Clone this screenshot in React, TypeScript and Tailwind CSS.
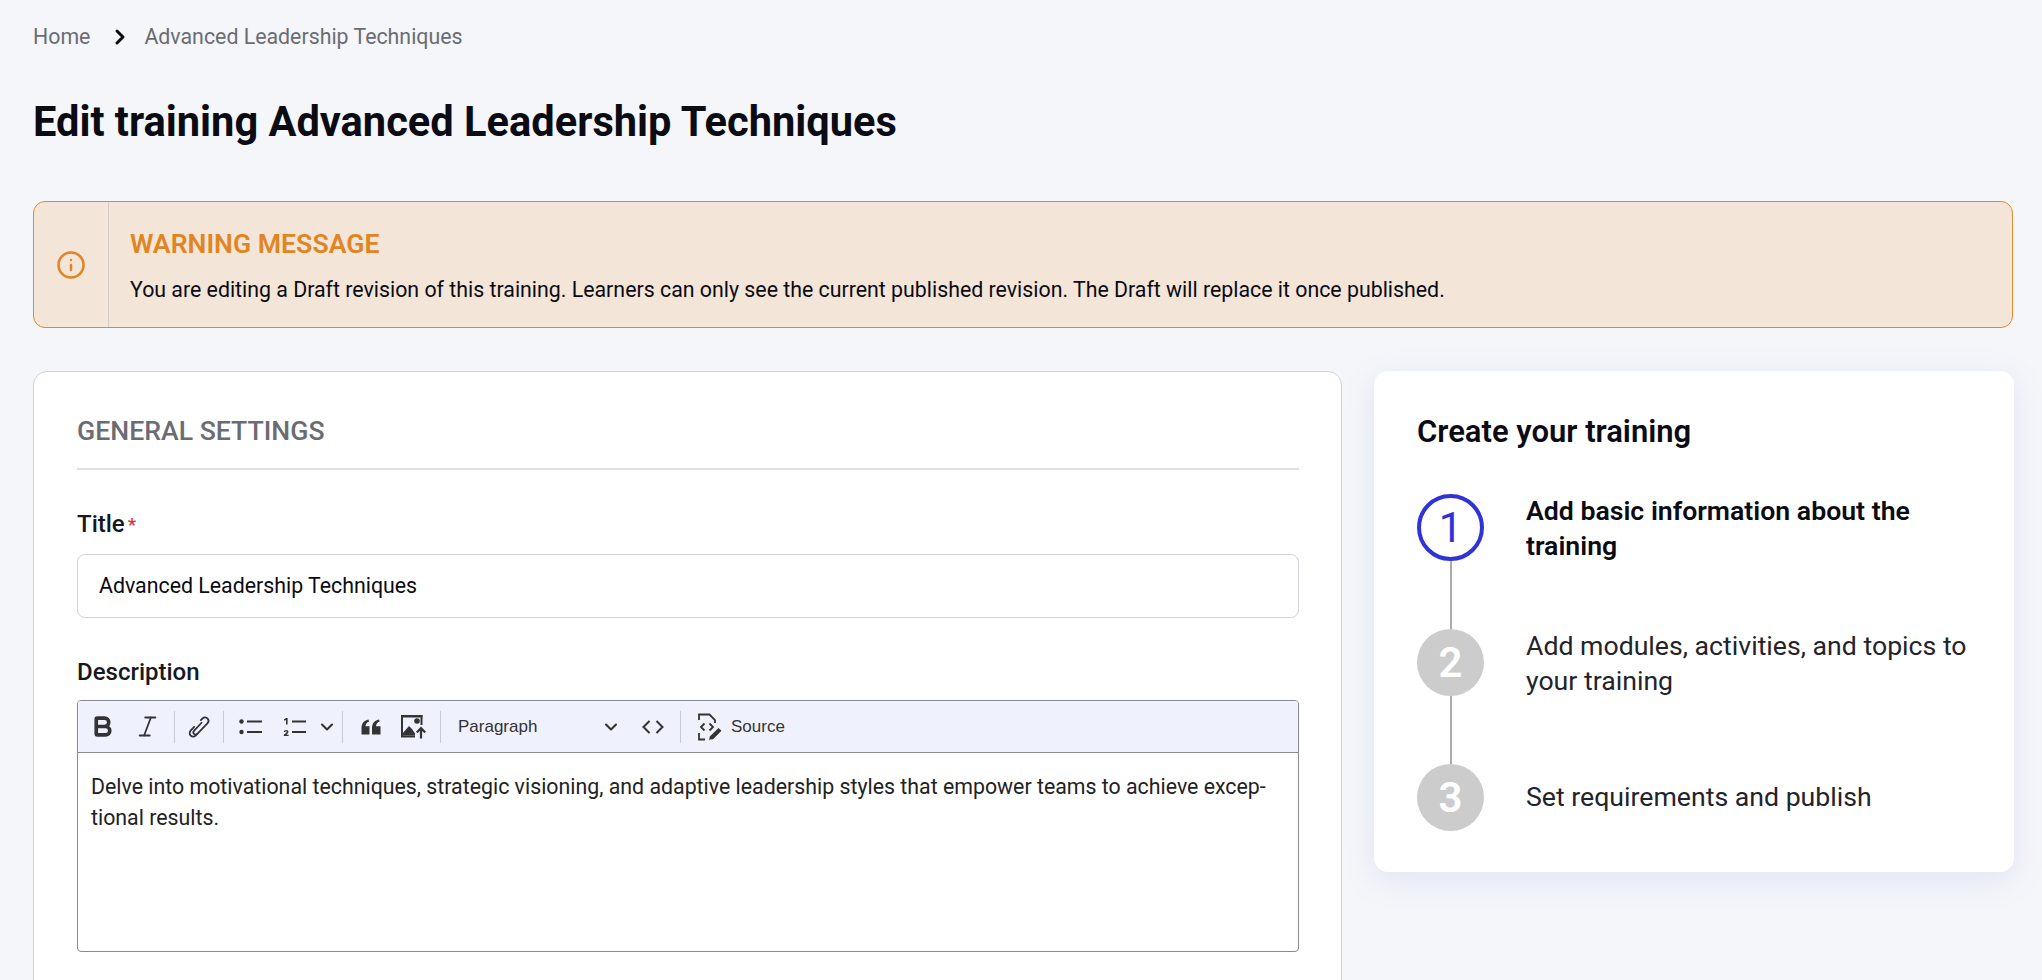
import { Bold, ChevronDown, ChevronRight, Info, Italic } from "lucide-react";

const steps = [
  { n: "1", text: "Add basic information about the training", active: true },
  { n: "2", text: "Add modules, activities, and topics to your training", active: false },
  { n: "3", text: "Set requirements and publish", active: false },
];

function Sep() {
  return <span className="mx-[5px] h-[32px] w-px bg-[#c9cbd1]" />;
}

function LinkIcon() {
  return (
    <svg width="26" height="26" viewBox="0 0 22 22" fill="none" stroke="#333" strokeWidth="1.5" strokeLinecap="round">
      <path d="M12.5 5.200 14 3.800c1.300-1.200 3.200-1.100 4.300.1 1 1.200.9 3-.2 4.100l-8.300 8.700c-.9.9-2.200.9-3 .1-.8-.8-.7-2 .1-2.800l6.300-6.600" />
      <path d="M9.500 16.800l-1.400 1.400c-1.200 1.200-3 1.200-4.100.1-1.100-1.100-1.200-3-.1-4.200l3-3.200" />
    </svg>
  );
}

function BulletIcon() {
  return (
    <svg width="24" height="20" viewBox="0 0 24 20" fill="#333">
      <circle cx="2.500" cy="4.500" r="2.200" />
      <circle cx="2.500" cy="15" r="2.200" />
      <rect x="8" y="3.500" width="15" height="2" />
      <rect x="8" y="14" width="15" height="2" />
    </svg>
  );
}

function NumberIcon() {
  return (
    <svg width="24" height="20" viewBox="0 0 24 20" fill="#333">
      <path d="M1 2.200 3.200 1H4.600v6.500H3V2.900L1 3.700z" />
      <path d="M.8 19v-1.300l2.600-2.300c.5-.5.4-1.200-.3-1.200-.6 0-.8.4-.9.9L.8 15c.1-1.300 1-2.100 2.400-2.100 1.500 0 2.300.8 2.300 1.900 0 .8-.4 1.300-1.100 1.900l-1.100 1h2.300V19z" />
      <rect x="9" y="3.500" width="14" height="2" />
      <rect x="9" y="14" width="14" height="2" />
    </svg>
  );
}

function QuoteIcon() {
  return (
    <svg width="20" height="16" viewBox="0 0 20 16" fill="#333">
      <path d="M.5 15.500V9.600C.5 4.800 2.700 1.500 7.500.5l.6 1.900C5.700 3.300 4.600 5 4.500 7.200h4v8.300z" />
      <path d="M11 15.500V9.600C11 4.800 13.200 1.500 18 .5l.6 1.900c-2.400.9-3.500 2.600-3.600 4.800h4.500v8.300z" />
    </svg>
  );
}

function ImageUploadIcon() {
  return (
    <svg width="28" height="26" viewBox="0 0 28 26">
      <path d="M1 1h21.500v2.500H1z" fill="#333" />
      <path d="M1 1h2v20.500h12v2H1zM20.500 1h2v10h-2z" fill="#333" />
      <circle cx="17" cy="7" r="2.800" fill="#333" />
      <path d="M3 21.500V19l6-7 3 3 3 4.500v2z" fill="#333" />
      <path d="M21 24.500v-10M16.800 18.500l4.200-4.500 4.200 4.500" fill="none" stroke="#333" strokeWidth="2.200" />
    </svg>
  );
}

function CodeIcon() {
  return (
    <svg width="22" height="14" viewBox="0 0 22 14" fill="none" stroke="#333" strokeWidth="2">
      <path d="M7.500 1 1.500 7l6 6M14.500 1l6 6-6 6" />
    </svg>
  );
}

function SourceIcon() {
  return (
    <svg width="26" height="28" viewBox="0 0 26 28" fill="none" stroke="#333" strokeWidth="1.800">
      <path d="M2 7V1.500h10.500L18 7v3M2 20v6.500h6" />
      <path d="M7.500 10.500l-3.500 3.500 3.500 3.500M12.500 10.500l3.500 3.500-3.500 3.500" />
      <path d="M13 26.500l-1 1 .8-4L21.500 15l3 2.800-8.500 8.500z" fill="#333" stroke="none" />
    </svg>
  );
}

function ToolBtn({ children, w }: { children: React.ReactNode; w: string }) {
  return <span className={`flex h-[52px] items-center justify-center ${w}`}>{children}</span>;
}

export default function App() {
  return (
    <div className="h-screen overflow-hidden bg-[#f4f6fa] pl-[33px] font-['Roboto',sans-serif]">
      <nav className="flex h-[74px] items-center text-[21.33px] text-[#6b6c72]">
        <span>Home</span>
        <ChevronRight className="ml-[18px] mr-[12px] size-[24px] text-[#0b0b14]" strokeWidth={3} />
        <span>Advanced Leadership Techniques</span>
      </nav>

      <h1 className="mt-[23px] text-[41.6px] font-bold leading-[50px] text-[#0b0b14]">
        Edit training Advanced Leadership Techniques
      </h1>

      <div className="mt-[54px] flex h-[127px] w-[1980px] rounded-[12px] border border-[#e08a2d] bg-[#f3e5d7]">
        <div className="flex w-[75px] flex-none items-center justify-center border-r border-[#d2cec8]">
          <Info className="size-[30px] text-[#e08524]" strokeWidth={2} />
        </div>
        <div className="pl-[21px] pt-[26px]">
          <div className="text-[26.67px] font-semibold leading-[32px] text-[#e08524]">WARNING MESSAGE</div>
          <p className="mt-[16px] text-[21.33px] leading-[28px] text-[#0b0b14]">
            You are editing a Draft revision of this training. Learners can only see the current published revision. The Draft will replace it once published.
          </p>
        </div>
      </div>

      <div className="mt-[43px] flex w-[1981px] items-start gap-[32px]">
        <section className="h-[800px] w-[1309px] flex-none rounded-[14px] border border-[#d0d2d7] bg-white pl-[43px] pr-[42px] pt-[41px]">
          <h2 className="border-b-2 border-[#dedfe3] pb-[19px] text-[26.67px] font-medium leading-[36px] text-[#6b6c72]">GENERAL SETTINGS</h2>

          <label className="mt-[39px] flex h-[30px] items-center text-[24px] font-medium leading-[30px] text-[#17181f]">
            Title<span className="ml-[3px] text-[19px] leading-none text-[#e0323c]">*</span>
          </label>
          <div className="mt-[15px] flex h-[64px] items-center rounded-[8px] border border-[#d0d2d7] px-[21px] text-[21.33px] text-[#0b0b14]">
            Advanced Leadership Techniques
          </div>

          <label className="mt-[39px] block text-[24px] font-medium leading-[30px] text-[#17181f]">Description</label>
          <div className="mt-[13px] h-[252px] overflow-hidden rounded-[4px] border border-[#8b8c92]">
            <div className="flex h-[52px] items-center border-b border-[#8b8c92] bg-[#eff2fd] pl-[1px]">
              <ToolBtn w="w-[46px]"><Bold className="size-[25px] text-[#333]" strokeWidth={3.5} /></ToolBtn>
              <ToolBtn w="w-[44px]"><Italic className="size-[27px] text-[#333]" strokeWidth={1.6} /></ToolBtn>
              <Sep />
              <ToolBtn w="w-[38px]"><LinkIcon /></ToolBtn>
              <Sep />
              <ToolBtn w="w-[44px]"><BulletIcon /></ToolBtn>
              <ToolBtn w="w-[44px]"><NumberIcon /></ToolBtn>
              <ChevronDown className="size-[20px] text-[#333]" strokeWidth={2.5} />
              <Sep />
              <ToolBtn w="w-[45px]"><QuoteIcon /></ToolBtn>
              <ToolBtn w="w-[42px]"><ImageUploadIcon /></ToolBtn>
              <Sep />
              <div className="flex w-[184px] items-center justify-between pl-[12px] pr-[9px] font-['Liberation_Sans',sans-serif] text-[17px] text-[#333]">
                <span>Paragraph</span>
                <ChevronDown className="size-[20px] text-[#333]" strokeWidth={2.5} />
              </div>
              <ToolBtn w="w-[45px]"><CodeIcon /></ToolBtn>
              <Sep />
              <span className="ml-[11px] flex items-center gap-[8px] font-['Liberation_Sans',sans-serif] text-[17px] text-[#333]">
                <SourceIcon />
                Source
              </span>
            </div>
            <div className="px-[13px] pt-[18px] text-[21.33px] leading-[31px] text-[#222]">
              Delve into motivational techniques, strategic visioning, and adaptive leadership styles that empower teams to achieve excep-<br />
              tional results.
            </div>
          </div>
        </section>

        <aside className="h-[501px] w-[640px] flex-none rounded-[14px] bg-white px-[43px] pt-[41px] shadow-[0_8px_32px_rgba(120,130,200,0.14)]">
          <h3 className="text-[31px] font-semibold leading-[40px] text-[#0b0b14]">Create your training</h3>
          <div className="mt-[42px]">
            {steps.map((s, i) => (
              <div key={s.n} className={`flex gap-[42px] ${i < 2 ? "h-[135px]" : "h-[67px]"}`}>
                <div className="flex w-[67px] flex-none flex-col items-center">
                  <div
                    className={`flex size-[67px] flex-none items-center justify-center rounded-full text-[42px] ${
                      s.active ? "border-[4px] border-[#2f33d9] text-[#2f33d9]" : "bg-[#cccccc] font-semibold text-white"
                    }`}
                  >
                    {s.n}
                  </div>
                  {i < 2 && <div className="w-[2px] flex-1 bg-[#ababab]" />}
                </div>
                <div className={`text-[26.67px] leading-[35px] ${s.active ? "font-semibold text-[#0b0b14]" : "text-[#23242b]"} ${i === 2 ? "flex items-center" : ""}`}>
                  {s.text}
                </div>
              </div>
            ))}
          </div>
        </aside>
      </div>
    </div>
  );
}
